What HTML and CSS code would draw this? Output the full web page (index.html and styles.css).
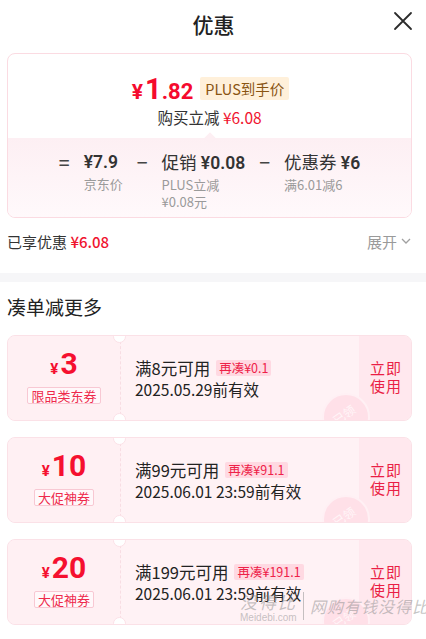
FILE: index.html
```html
<!DOCTYPE html>
<html lang="zh-CN">
<head>
<meta charset="utf-8">
<title>优惠</title>
<link rel="stylesheet" href="styles.css">
</head>
<body>
<div class="page">
  <header class="topbar">
    <span></span>
    <h1 class="title">优惠</h1>
    <button class="close" aria-label="关闭">
      <svg width="20" height="20" viewBox="0 0 20 20"><path d="M2 2 L18 18 M18 2 L2 18" stroke="#2b2b2b" stroke-width="1.8" fill="none" stroke-linecap="round"/></svg>
    </button>
  </header>

  <section class="price-card">
    <div class="price-top">
      <div class="price-row">
        <span class="price"><span class="p-cur">¥</span><span class="p-int">1</span><span class="p-dec">.82</span></span>
        <span class="plus-badge">PLUS到手价</span>
      </div>
      <div class="save-row">购买立减 <span class="red">¥6.08</span></div>
    </div>
    <div class="price-break">
      <span class="op">=</span>
      <div class="col">
        <div class="main">¥7.9</div>
        <div class="sub">京东价</div>
      </div>
      <span class="op">−</span>
      <div class="col">
        <div class="main"><span class="cn">促销</span> ¥0.08</div>
        <div class="sub">PLUS立减<br>¥0.08元</div>
      </div>
      <span class="op">−</span>
      <div class="col">
        <div class="main"><span class="cn">优惠券</span> ¥6</div>
        <div class="sub">满6.01减6</div>
      </div>
    </div>
  </section>

  <div class="enjoyed">
    <div>已享优惠 <span class="red">¥6.08</span></div>
    <div class="expand">展开
      <svg width="12" height="12" viewBox="0 0 12 12"><path d="M2 4 L6 8 L10 4" stroke="#a0a0a0" stroke-width="1.3" fill="none"/></svg>
    </div>
  </div>
</div>

<div class="band"></div>

<div class="page">
  <h2 class="sec-title">凑单减更多</h2>

  <div class="coupon">
    <div class="stub">
      <div class="amt"><span class="cur">¥</span><span class="num">3</span></div>
      <div class="kind">限品类东券</div>
    </div>
    <div class="body">
      <div class="info">
        <div class="cond"><span>满8元可用</span><span class="more">再凑¥0.1</span></div>
        <div class="date">2025.05.29前有效</div>
      </div>
      <div class="stamp"><span>已领</span></div>
      <div class="use">立即<br>使用</div>
    </div>
  </div>

  <div class="coupon">
    <div class="stub">
      <div class="amt"><span class="cur">¥</span><span class="num">10</span></div>
      <div class="kind">大促神券</div>
    </div>
    <div class="body">
      <div class="info">
        <div class="cond"><span>满99元可用</span><span class="more">再凑¥91.1</span></div>
        <div class="date">2025.06.01 23:59前有效</div>
      </div>
      <div class="stamp"><span>已领</span></div>
      <div class="use">立即<br>使用</div>
    </div>
  </div>

  <div class="coupon">
    <div class="stub">
      <div class="amt"><span class="cur">¥</span><span class="num">20</span></div>
      <div class="kind">大促神券</div>
    </div>
    <div class="body">
      <div class="info">
        <div class="cond"><span>满199元可用</span><span class="more">再凑¥191.1</span></div>
        <div class="date">2025.06.01 23:59前有效</div>
      </div>
      <div class="stamp"><span>已领</span></div>
      <div class="use">立即<br>使用</div>
    </div>
  </div>
</div>

<div class="watermark">
  <div class="wm-left">
    <div class="wm-big">没得比</div>
    <div class="wm-small">Meidebi.com</div>
  </div>
  <div class="wm-line"></div>
  <div class="wm-right">网购有钱没得比</div>
</div>
</body>
</html>
```

FILE: styles.css
```css
* { box-sizing: border-box; }
html, body { margin: 0; padding: 0; }
body {
  width: 426px;
  height: 639px;
  overflow: hidden;
  background: #ffffff;
  font-family: "Noto Sans CJK SC", "Noto Sans", sans-serif;
  color: #222;
  position: relative;
}
.page { padding: 0 14px 0 7px; }
.red { color: #f0142f; }

.topbar {
  height: 46px;
  display: grid;
  grid-template-columns: 1fr auto 1fr;
  align-items: center;
}
.title {
  margin: 0;
  font-size: 21px;
  font-weight: 500;
  line-height: 46px;
  color: #222;
  transform: translate(4px, 1px);
}
.close {
  justify-self: end;
  margin: 0;
  padding: 0;
  border: 0;
  background: none;
  width: 20px;
  height: 20px;
  margin-top: -4px;
  margin-right: -1px;
}

.price-card {
  margin-top: 7px;
  border: 1px solid #fbdbe2;
  border-radius: 8px;
  overflow: hidden;
}
.price-top {
  padding: 21px 0 10px;
  display: flex;
  flex-direction: column;
  align-items: center;
}
.price-row {
  display: flex;
  align-items: center;
  gap: 7px;
  height: 26px;
  transform: translateX(1px);
}
.price {
  color: #f50a2e;
  font-weight: 700;
  font-family: "Roboto", "Noto Sans", sans-serif;
  display: flex;
  align-items: baseline;
  line-height: 1;
  margin-top: 2px;
}
.p-cur { font-size: 21px; margin-right: 2px; }
.p-int { font-size: 29px; }
.p-dec { font-size: 22px; }
.plus-badge {
  background: #fff0da;
  color: #8a5512;
  font-size: 14.5px;
  line-height: 23px;
  padding: 0 5px;
  border-radius: 2px;
}
.save-row {
  margin-top: 5px;
  font-size: 15.5px;
  line-height: 22px;
  color: #333;
}
.save-row .red { color: #f0142f; }

.price-break {
  position: relative;
  background: linear-gradient(#fdeff3, #fff9fb);
  padding: 14px 0 7px;
  display: flex;
  justify-content: center;
  align-items: flex-start;
  gap: 14px;
}
.price-break::before {
  content: "";
  position: absolute;
  top: -4px;
  left: 50%;
  width: 8px;
  height: 8px;
  margin-left: -4px;
  background: #fdeff3;
  transform: rotate(45deg);
}
.op {
  font-size: 19px;
  line-height: 20px;
  color: #444;
  font-weight: 500;
}
.col .main {
  font-size: 17.5px;
  line-height: 20px;
  font-weight: 600;
  color: #333;
  font-family: "Roboto", "Noto Sans", sans-serif;
  white-space: nowrap;
}
.col .main .cn {
  font-family: "Noto Sans CJK SC", sans-serif;
  font-weight: 400;
}
.col .sub {
  margin-top: 3px;
  font-size: 13px;
  line-height: 17px;
  color: #9a9a9a;
}

.enjoyed {
  margin-top: 11px;
  height: 24px;
  display: flex;
  justify-content: space-between;
  align-items: center;
  font-size: 15px;
  color: #333;
}
.enjoyed .red { font-weight: 500; }
.expand {
  color: #9a9a9a;
  display: flex;
  align-items: center;
  gap: 3px;
}

.band {
  margin-top: 20px;
  height: 9px;
  background: #f6f6f8;
}

.sec-title {
  margin: 12px 0 15px;
  font-size: 19px;
  line-height: 26px;
  font-weight: 400;
  color: #222;
}

.coupon {
  position: relative;
  height: 86px;
  margin-bottom: 16px;
  display: flex;
  border: 1px solid #fbe1e7;
  border-radius: 8px;
  overflow: hidden;
  background: #fff2f5;
}
.stub {
  position: relative;
  width: 113px;
  flex: none;
  background: #fff0f3;
  border-right: 1px dashed #f8dde3;
  display: flex;
  flex-direction: column;
  align-items: center;
  justify-content: center;
  padding-bottom: 2px;
}
.stub::before, .stub::after {
  content: "";
  position: absolute;
  right: -6px;
  width: 11px;
  height: 11px;
  border-radius: 50%;
  background: #ffffff;
  border: 1px solid #fbe1e7;
}
.stub::before { top: -6px; }
.stub::after { bottom: -6px; }
.amt {
  color: #f5102f;
  font-weight: 700;
  font-family: "Roboto", "Noto Sans", sans-serif;
  display: flex;
  align-items: baseline;
  line-height: 28px;
}
.amt .cur { font-size: 15px; margin-right: 2px; }
.amt .num { font-size: 30px; }
.kind {
  margin-top: 4px;
  font-size: 13px;
  line-height: 15px;
  padding: 0 3px;
  color: #ee2a4c;
  background: #fff8fa;
  border: 1px solid #f8c8d3;
  border-radius: 2px;
}
.body {
  position: relative;
  flex: 1;
  display: flex;
  overflow: hidden;
}
.info {
  flex: 1;
  padding: 21px 0 0 14px;
}
.cond {
  display: flex;
  align-items: center;
  gap: 6px;
  font-size: 16.5px;
  line-height: 22px;
  color: #222;
}
.more {
  font-size: 12.5px;
  line-height: 16px;
  padding: 0 3px;
  background: #ffd9e2;
  color: #ee2148;
  border-radius: 2px;
}
.date {
  font-size: 15.5px;
  line-height: 20px;
  color: #222;
  margin-top: 0;
}
.use {
  width: 52px;
  flex: none;
  background: #ffe8ee;
  color: #ea1f45;
  font-size: 15px;
  line-height: 18px;
  display: flex;
  align-items: center;
  justify-content: center;
  text-align: center;
  letter-spacing: 1px;
  padding-left: 2px;
  padding-bottom: 2px;
}
.stamp {
  position: absolute;
  left: 201px;
  top: 57px;
  width: 48px;
  height: 48px;
  border-radius: 50%;
  background: #ffe0e8;
  border: 2px solid #fff0f4;
  display: flex;
  align-items: center;
  justify-content: center;
}
.stamp span {
  color: #fff6f8;
  font-size: 12px;
  transform: rotate(-35deg) translateY(-4px);
}

.watermark {
  position: absolute;
  left: 240px;
  top: 592px;
  display: flex;
  align-items: flex-start;
  gap: 6px;
  pointer-events: none;
  color: rgba(140, 140, 140, 0.5);
  white-space: nowrap;
}
.wm-big {
  font-size: 17px;
  line-height: 20px;
  font-style: italic;
  letter-spacing: 2px;
  white-space: nowrap;
}
.wm-small {
  font-size: 10px;
  line-height: 11px;
  font-family: "Liberation Sans", sans-serif;
}
.wm-line {
  width: 1px;
  height: 28px;
  background: rgba(140, 140, 140, 0.5);
}
.wm-right {
  font-size: 16px;
  line-height: 20px;
  margin-top: 4px;
  font-style: italic;
  letter-spacing: 1px;
  white-space: nowrap;
}
```
